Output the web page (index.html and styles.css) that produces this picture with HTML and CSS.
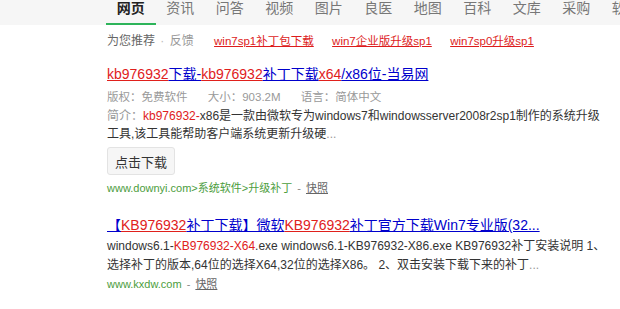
FILE: index.html
```html
<!DOCTYPE html>
<html lang="zh-CN">
<head>
  <meta charset="UTF-8" />
  <title>kb976932 - 搜索</title>
  <link rel="stylesheet" href="styles.css">
</head>
<body>
  <nav class="tabs">
    <a class="tab active">网页</a>
    <a class="tab">资讯</a>
    <a class="tab">问答</a>
    <a class="tab">视频</a>
    <a class="tab">图片</a>
    <a class="tab">良医</a>
    <a class="tab">地图</a>
    <a class="tab">百科</a>
    <a class="tab">文库</a>
    <a class="tab">采购</a>
    <a class="tab">软件</a>
  </nav>

  <main class="results">
    <div class="suggest">
      <span class="suggest-label">为您推荐</span>
      <span class="dot">·</span>
      <span class="feedback">反馈</span>
      <a class="suggest-link">win7sp1补丁包下载</a>
      <a class="suggest-link">win7企业版升级sp1</a>
      <a class="suggest-link">win7sp0升级sp1</a>
    </div>

    <div class="result first">
      <h3 class="title"><a><em>kb976932</em><span>下载-</span><em>kb976932</em><span>补丁下载</span><em>x64</em><span>/x86位-当易网</span></a></h3>
      <div class="meta">
        <span>版权：免费软件</span>
        <span>大小：903.2M</span>
        <span>语言：简体中文</span>
      </div>
      <p class="abstract"><span class="label">简介：</span><em>kb976932-</em>x86是一款由微软专为windows7和windowsserver2008r2sp1制作的系统升级<br>工具,该工具能帮助客户端系统更新升级硬<span class="more">...</span></p>
      <button class="btn" type="button">点击下载</button>
      <div class="url">www.downyi.com&gt;系统软件&gt;升级补丁 <span class="sep">-</span> <a class="cache">快照</a></div>
    </div>

    <div class="result second">
      <h3 class="title"><a><span>【</span><em>KB976932</em><span>补丁下载】微软</span><em>KB976932</em><span>补丁官方下载Win7专业版(32...</span></a></h3>
      <p class="abstract loose">windows6.1-<em>KB976932-X64</em>.exe windows6.1-KB976932-X86.exe KB976932补丁安装说明 1、<br>选择补丁的版本,64位的选择X64,32位的选择X86。 2、双击安装下载下来的补丁<span class="more">...</span></p>
      <div class="url">www.kxdw.com <span class="sep">-</span> <a class="cache">快照</a></div>
    </div>
  </main>
</body>
</html>
```

FILE: styles.css
```css
body {
  margin: 0;
  padding: 0;
  width: 620px;
  overflow: hidden;
  background: #ffffff;
  color: #333333;
  font-family: "Liberation Sans", Arial, "Noto Sans CJK SC", sans-serif;
  font-size: 12px;
}

a {
  cursor: pointer;
}

em {
  font-style: normal;
}

/* Top tabs */
.tabs {
  display: flex;
  height: 25px;
  padding-left: 106px;
  background: #f6f6f6;
  white-space: nowrap;
  overflow: hidden;
}

.tab {
  flex: 0 0 49.5px;
  height: 23px;
  line-height: 17px;
  text-align: center;
  font-size: 14px;
  color: #777777;
  border-bottom: 2px solid transparent;
}

.tab.active {
  color: #222222;
  font-weight: bold;
  border-bottom-color: #2db45a;
}

/* Results */
.results {
  padding-left: 107px;
}

.suggest {
  margin-top: 7px;
  line-height: 18px;
  color: #666666;
}

.suggest .dot {
  color: #bbbbbb;
  margin: 0 2px;
}

.suggest .feedback {
  color: #999999;
  margin-right: 17px;
}

.suggest-link {
  font-size: 11.5px;
  color: #dd1c1c;
  text-decoration: underline;
  margin-right: 15px;
}

.result {
  margin-top: 13px;
}

.result.second {
  margin-top: 17px;
}

.title {
  margin: 0;
  font-size: 14px;
  font-weight: normal;
  line-height: 22px;
}

.title span,
.title em {
  color: #0000cc;
  text-decoration: underline;
}

.title em {
  color: #e0201c;
}

.meta {
  margin-top: 3px;
  font-size: 11.5px;
  line-height: 18.5px;
  color: #999999;
}

.meta span {
  margin-right: 17px;
}

.abstract {
  margin: 0;
  line-height: 18.3px;
  color: #333333;
}

.abstract.loose {
  margin-top: 1px;
  line-height: 19px;
}

.abstract .label {
  color: #999999;
}

.abstract em {
  color: #e0201c;
}

.abstract .more {
  color: #999999;
}

.btn {
  display: block;
  margin-top: 4px;
  width: 68px;
  height: 28px;
  padding: 0;
  font-family: inherit;
  font-size: 13px;
  color: #333333;
  background: #f6f6f6;
  border: 1px solid #e3e3e3;
  border-radius: 3px;
}

.url {
  margin-top: 4px;
  font-size: 11px;
  line-height: 18px;
  color: #4c9d3d;
}

.second .url {
  margin-top: 0;
}

.url .sep {
  color: #888888;
  margin: 0 2px;
}

.cache {
  color: #666666;
  text-decoration: underline;
}
```
